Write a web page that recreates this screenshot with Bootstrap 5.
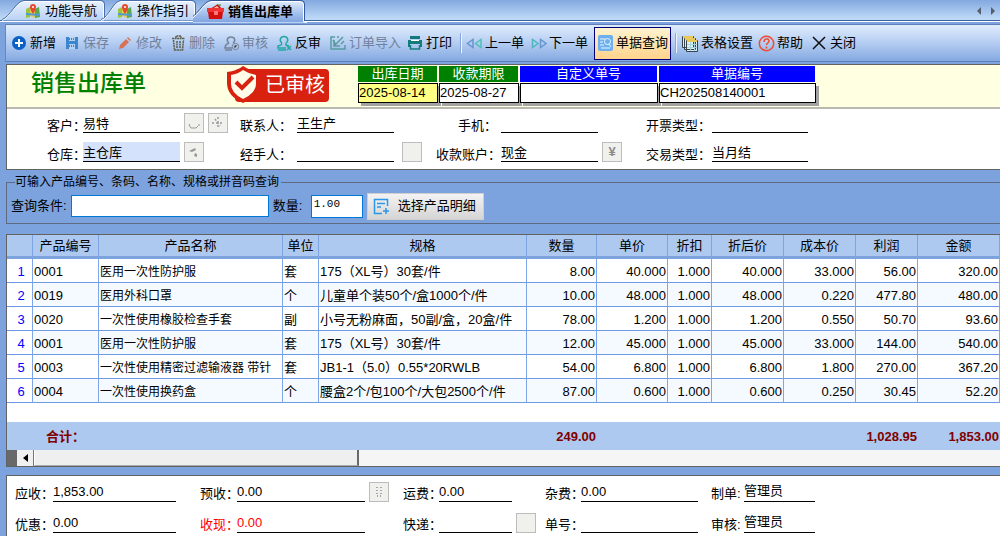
<!DOCTYPE html>
<html lang="zh-CN">
<head>
<meta charset="utf-8">
<meta name="viewport" content="width=device-width, initial-scale=1">
<title>销售出库单</title>
<link rel="stylesheet" href="https://cdn.jsdelivr.net/npm/bootstrap@5.3.0/dist/css/bootstrap.min.css">
<script src="https://cdn.jsdelivr.net/npm/bootstrap@5.3.0/dist/js/bootstrap.bundle.min.js"></script>
<style>
body{background:#7da3df;color:#000;font:13px/18px "Liberation Sans","Noto Sans CJK SC",sans-serif;overflow-x:hidden}
button,input{font:inherit;color:inherit;border-radius:0}
button{background:none;border:0;padding:0;white-space:nowrap}
svg{flex:none;display:block}
/* tabs */
.tabstrip{height:24px;padding-left:2px;background:linear-gradient(#83a8e0,#bfdaf7 19px,#bfdaf7 20px,#39609f 20px,#39609f 21px,#fff 21px,#fff 22px,#7da3df 22px)}
.doc-tab{height:21px;padding-left:23px}
.doc-tab span,.doc-tab .ico{position:relative}
.doc-tab .shape{position:absolute;left:0;top:0}
.t1{width:99px}.t2{width:92px;padding-left:16px}.t3{width:112px;height:23px;padding-left:14px;font-weight:700}
/* toolbar */
.tools{height:38px;margin-left:5px;padding-left:6px;border-top:1px solid #5f80ba;border-bottom:1px solid #5f80ba;border-left:1px solid #6686bf;background:linear-gradient(#dfecfd,#b9d0f3 45%,#84a9e1)}
.tools button{height:33px;gap:2px;flex:none;display:flex;align-items:center}
.w2{width:53px}.w3{width:64px}.w4{width:77px}
.tools .off{color:#71819c}
.tools .chosen{border:1px solid #00007c;background:linear-gradient(#fff2d0,#ffd38c);padding-left:3px;width:77px}
.sep{width:2px;height:20px;border-left:1px solid #88a8db;border-right:1px solid #eef5ff}
/* panels */
.panel{margin-left:6px;border:1px solid #626262;border-right:0;background:#fff}
.head{height:44px;background:#ffffe1;border-bottom:2px solid #b9b9b2;padding-left:24px}
.doc-title{font-size:23px;line-height:36px;font-weight:500;color:#008000;margin:0;width:196px}
.stamp{width:131px;height:38px}
.stamp b{position:absolute;left:38px;top:4px;font-size:20px;line-height:32px;font-weight:400;color:#fff}
.code{margin-right:1px}
.code label{display:block;height:16px;line-height:16px;color:#fff;text-align:center;margin:1px 1px 1px 0;background:#008000}
.code.blue label{background:#00f}
.code input{display:block;width:100%;height:20px;padding:0 0 2px;border:1px solid #000;background:#fff;box-shadow:3px 3px 0 #a3a3a3}
.c-date{width:80px}.c-no{width:138px}.c-id{width:157px}
.date-on input{background:#ffff84}
.fields{display:grid;align-items:end}
.fields label{white-space:nowrap}
.fields input,.fields output{display:block;width:100%;min-width:0;height:20px;padding:0;border:0;border-bottom:1px solid #000;background:transparent}
.main-fields{grid-template-columns:36px 40px 97px 60px 57px 97px 40px 67px 97px 48px 66px 96px 1fr;row-gap:7px;padding:4px 0 5px}
.main-fields input{margin-bottom:2px}
.mini{width:20px;height:20px;border:1px solid #bcbcbc!important;background:#f0f0ec!important;color:#8b8b8b;display:flex;align-items:center;justify-content:center}
.hot{background:#d5e2fc!important}
/* search */
.query{margin:5px 0 0 6px;border:1px solid #5f6b82;border-right:0;padding:0;height:49px}
.query legend{float:none;width:auto;margin:0 0 0 8px;padding:0 2px 0 0;font-size:12px;line-height:14px}
.query-row{gap:4px;padding:3px 0 0 4px;height:31px}
.query input{border:1px solid #0078d7;outline:0;background:#fff}
.q-text{width:198px;height:22px}
.q-lab{width:34px}
.q-num{width:52px;height:23px;padding:0 2px 4px;font:11px "Liberation Mono",monospace}
.pick{width:117px;height:27px;background:linear-gradient(#f3f3f3,#d5d5d5);border:1px solid #cfcfcf;padding-left:5px}
/* grid */
.goods-panel{margin-top:10px}
.goods{table-layout:fixed;width:100%;border-collapse:separate;border-spacing:0}
.goods th,.goods td{padding:0 1px;white-space:nowrap;overflow:hidden;line-height:18px}
.goods thead th{height:24px;background:#aec9ef;text-align:center;font-weight:400;border-right:1px solid #7da3e3;border-bottom:3px solid #7da3df}
.goods tbody td,.goods tbody th{height:24px;border-right:1px solid #7fa6e9;border-bottom:1px solid #6f9be5;padding-top:2px}
.goods tbody tr:nth-child(even) td{background:#f4faff}
.goods tbody th{font-weight:400;color:#00f;text-align:center;padding-left:4px}
.goods td:nth-child(3){font-size:12px}
.goods td:nth-child(n+6){text-align:right}
.goods .blank td{height:19px;border:0}
.goods .sum td{height:28px;border:0;background:#aec9ef;color:#800000;font-size:13px;font-weight:700;text-align:right;padding-top:2px}
.goods .sum td:first-child{text-align:left;padding-left:39px}
.hbar{height:16px;background:#f5f5f5}
.hbar i{width:10px;background:#696969}
.hbar button{width:17px;background:#f0f0f0;border-right:1px solid #777}
.hbar .thumb{width:325px;background:#efefef;border-left:1px solid #fff;border-right:2px solid #696969;border-bottom:1px solid #aaa}
.pay-panel{margin-top:8px}
.pay{grid-template-columns:8px 38px 123px 24px 37px 128px 38px 36px 73px 33px 36px 117px 13px 33px 71px 1fr;row-gap:11px;padding-top:6px;line-height:17px}
.red{color:#f00}
</style>
</head>
<body class="d-flex flex-column min-vh-100">
<svg width="0" height="0" class="position-absolute" aria-hidden="true">
  <defs>
    <linearGradient id="tabfill" x2="0" y2="1"><stop stop-color="#e6f0fd"/><stop offset="1" stop-color="#b9d2f5"/></linearGradient>
    <linearGradient id="tabon" x2="0" y2="1"><stop stop-color="#dfeafb"/><stop offset=".5" stop-color="#a9c4ee"/><stop offset="1" stop-color="#7da3df"/></linearGradient>
    <symbol id="map" viewBox="0 0 16 16"><path fill="#9cc63e" d="M1 6l4-2v10l-4 1z"/><path fill="#e3cf55" d="M5 4l5 2v9l-5-2z"/><path fill="#58a94b" d="M10 6l4-2 1 10-5 1z"/><path stroke="#4c9bd6" stroke-width="2" d="M1 11l14 1"/><path fill="#e5492e" d="M8 11C6 8 5 6 5 4a3 3 0 016 0c0 2-1 4-3 7z"/><circle cx="8" cy="4" r="1" fill="#fff"/></symbol>
  </defs>
</svg>

<nav class="tabstrip d-flex align-items-start">
  <button class="doc-tab t1 position-relative d-flex align-items-center gap-1">
    <svg class="shape" width="104" height="21"><path d="M0 20.500C8 18 14 2 22 1.500H98Q101.500 1.500 101.500 4V20.500" fill="url(#tabfill)" stroke="#fff"/><path d="M0 19.500C8 17 14 1 22 .5H99Q102.500 .5 102.500 4V20" fill="none" stroke="#4a70ab"/></svg>
    <svg class="ico" width="16" height="16"><use href="#map"/></svg><span>功能导航</span>
  </button>
  <button class="doc-tab t2 position-relative d-flex align-items-center gap-1">
    <svg class="shape" width="98" height="21"><path d="M0 20.500C8 18 12 2 20 1.500H90Q93.500 1.500 93.500 4V20.500" fill="url(#tabfill)" stroke="#fff"/><path d="M0 19.500C8 17 12 1 20 .5H91Q94.500 .5 94.500 4V20" fill="none" stroke="#4a70ab"/></svg>
    <svg class="ico" width="16" height="16"><use href="#map"/></svg><span>操作指引</span>
  </button>
  <button class="doc-tab t3 position-relative d-flex align-items-center gap-1">
    <svg class="shape" width="114" height="23"><path d="M-8 21.500C4 20 10 2 18 1.500H107Q110.500 1.500 110.500 4V21.500L114 23H-8Z" fill="url(#tabon)" stroke="#fff"/><path d="M-8 20.500C4 18 10 1 18 .5H108Q111.500 .5 111.500 4V20.500" fill="none" stroke="#33599a"/></svg>
    <svg class="ico" width="17" height="17" viewBox="0 0 17 17"><path fill="#c91515" d="M3 6l8-5 4 5z"/><path fill="#f3b6a7" d="M5 6l5-3 3 3z"/><path fill="#f03434" d="M0 5h17v4H0z"/><path fill="#d50e0e" d="M1 9h15l-1 7H2z"/><path fill="#f77" d="M7 8h4v4H7z"/><path fill="#47a044" d="M11 2l3-1-1 3z"/></svg><span>销售出库单</span>
  </button>
  <div class="ms-auto d-flex gap-2 pt-1 pe-1">
    <button aria-label="向左"><svg width="6" height="14" viewBox="0 0 6 14"><path fill="#555f6c" d="M5 3v8L1 7z"/></svg></button>
    <button aria-label="向右"><svg width="6" height="14" viewBox="0 0 6 14"><path fill="#555f6c" d="M1 3v8l4-4z"/></svg></button>
  </div>
</nav>

<div class="tools d-flex align-items-center" role="toolbar">
  <button class="w2"><svg width="16" height="16" viewBox="0 0 16 16"><circle cx="7" cy="8" r="7" fill="#0b62c4"/><path stroke="#fff" stroke-width="2" d="M7 4v8M3 8h8"/></svg>新增</button>
  <button class="w2 off"><svg width="16" height="16" viewBox="0 0 16 16"><path fill="#3b87cf" d="M1 2h12v12H1z"/><path fill="#b7d1f3" d="M4 2h6v4H4zM4 9h6v5H4z"/><path stroke="#3b87cf" stroke-width="2" stroke-dasharray="1 1" d="M4 11h6M4 4h6"/></svg>保存</button>
  <button class="w2 off"><svg width="16" height="16" viewBox="0 0 16 16"><path fill="#d97154" d="M1 14l1-4 6-6 3 3-6 6zM9 3l1-1 3 3-1 1z"/></svg>修改</button>
  <button class="w2 off"><svg width="16" height="16" viewBox="0 0 16 16"><path fill="none" stroke="#5e604f" stroke-width="1.500" stroke-dasharray="2 .5" d="M1 3.500h13M5 3V1h5v2M2.500 5l1 10h8l1-10M6 6v7M9 6v7"/></svg>删除</button>
  <button class="w2 off"><svg width="16" height="16" viewBox="0 0 16 16"><path fill="none" stroke="#768397" stroke-width="1.500" d="M5 8c-3-2-2-6 2-6s5 4 2 6M5 8c-3 1-4 2-4 5h7M1 15h7"/><circle cx="11.500" cy="11.500" r="3.200" fill="none" stroke="#768397"/><path stroke="#768397" d="M10 11l1 2 2-3"/></svg>审核</button>
  <button class="w2"><svg width="16" height="16" viewBox="0 0 16 16"><path fill="none" stroke="#25a7a2" stroke-width="1.500" d="M5 8c-3-2-2-6.500 2-6.500s5 4.500 2 6.500M5 8l-1 2-3 1v2h8M1 15h8M10 11l4 4M14 11l-4 4M9 8v2l3 1"/></svg>反审</button>
  <button class="w4 off"><svg width="17" height="16" viewBox="0 0 17 16"><path fill="none" stroke="#5a9a9f" stroke-width="1.500" d="M5 2H1v12h14v-4M7 2h2M4 5v6h6M5 10l8-8M3 5l3 5M11 9l3-3"/></svg>订单导入</button>
  <button class="w2"><svg width="17" height="16" viewBox="0 0 17 16"><path fill="#137b7b" d="M3 1h10v3H3zM1 5h14v7h-2V9H3v3H1z"/><path fill="none" stroke="#137b7b" stroke-width="1.500" d="M3.500 10v4h9v-4"/><path stroke="#fff" d="M4 5.500h8"/></svg>打印</button>
  <span class="sep me-1"></span>
  <button class="w3"><svg width="17" height="16" viewBox="0 0 17 16"><path fill="none" stroke="#6795cf" stroke-width="1.500" d="M7 4.500v8L1.500 8.500z"/><path fill="none" stroke="#4fc1b8" stroke-width="1.500" d="M15 4.500v8L9.500 8.500z"/></svg>上一单</button>
  <button class="w3"><svg width="17" height="16" viewBox="0 0 17 16"><path fill="none" stroke="#4fb6bf" stroke-width="1.500" d="M2.500 4.500v8L8 8.500z"/><path fill="none" stroke="#6795cf" stroke-width="1.500" d="M10.500 4.500v8L16 8.500z"/></svg>下一单</button>
  <button class="chosen"><svg width="16" height="16" viewBox="0 0 16 16"><rect width="15" height="16" rx="2" fill="#6eb0ee"/><path fill="none" stroke="#e9f6ff" d="M2 4h5M2 7h3M2 10h4M3 13h9M11 9l2 3"/><circle cx="9.500" cy="6.500" r="3" fill="none" stroke="#e9f6ff"/></svg>单据查询</button>
  <span class="sep mx-1"></span>
  <button class="w4"><svg width="18" height="17" viewBox="0 0 18 17"><path fill="#ddf1f5" stroke="#37444c" d="M1.500 1.500h11v11h-11zM3.500 3.500h11v11h-11zM5.500 5.500h11v11h-11z"/><path fill="#e8c75b" d="M2 1h10v2H2zM4 3h10v2H4zM6 5h10v2H6z"/><path stroke="#a9d3da" d="M6 9.500h10M6 12.500h10M9.500 7v9M13.500 7v9"/></svg>表格设置</button>
  <button class="w2"><svg width="17" height="17" viewBox="0 0 17 17"><circle cx="8.500" cy="8.500" r="7.200" fill="none" stroke="#f04a30" stroke-width="1.500"/><path fill="none" stroke="#f04a30" stroke-width="1.500" d="M6 7c0-4 5-4 5-1 0 2-2.500 2-2.500 4M8.500 11.500v2"/></svg>帮助</button>
  <button class="w2"><svg width="17" height="16" viewBox="0 0 17 16"><path stroke="#111" stroke-width="1.500" d="M2 2l12 12M14 2L2 14"/></svg>关闭</button>
</div>

<section class="panel mt-0 order-panel" style="margin-top:2px!important">
  <header class="head d-flex">
    <h1 class="doc-title">销售出库单</h1>
    <div class="stamp position-relative">
      <svg width="104" height="38" viewBox="0 0 104 38"><rect x="8" y="4" width="94" height="33" rx="4" fill="#d92110"/><path fill="#d92110" d="M0 7Q10 6 16 1q7 5 17 6v11q0 12-17 20Q0 31 0 18z"/><path fill="#fffbe8" d="M4 10q7-1 12-5 6 4 13 5v9q0 9-13 15Q4 28 4 19z"/><path fill="none" stroke="#d92110" stroke-width="4" d="M9 17l6 6 11-11"/></svg>
      <b>已审核</b>
    </div>
    <div class="code c-date date-on"><label for="d1">出库日期</label><input id="d1" value="2025-08-14"></div>
    <div class="code c-date"><label for="d2">收款期限</label><input id="d2" value="2025-08-27"></div>
    <div class="code c-no blue"><label for="d3">自定义单号</label><input id="d3"></div>
    <div class="code c-id blue"><label for="d4">单据编号</label><input id="d4" value="CH202508140001"></div>
  </header>
  <div class="fields main-fields">
    <span></span><span class="ps-1"><label for="f1">客户：</label></span><input id="f1" value="易特">
    <span class="d-flex gap-1 ps-1 align-self-start"><button class="mini" aria-label="选择客户"><svg width="14" height="14" viewBox="0 0 14 14"><path fill="none" stroke="#999" d="M2 9l2 3h5l2-2M3 9l-1-1M11 9h2"/></svg></button><button class="mini" aria-label="新建客户"><svg width="14" height="14" viewBox="0 0 14 14"><path fill="none" stroke="#999" stroke-width="1.500" stroke-dasharray="2 2" d="M1 7h12M7 1v12M4 3l5 7"/></svg></button></span>
    <label for="f2">联系人：</label><input id="f2" value="王生产"><span></span>
    <label for="f3" class="text-end pe-1">手机：</label><input id="f3"><span></span>
    <label for="f4">开票类型：</label><input id="f4"><span></span>

    <span></span><span class="ps-1"><label for="g1">仓库：</label></span><input id="g1" class="hot" value="主仓库">
    <span class="ps-1 align-self-start"><button class="mini" aria-label="选择仓库"><svg width="14" height="14" viewBox="0 0 14 14"><path fill="#999" d="M2 6l6-3 1 2-4 2zM8 8l2 1v3l-3-1z"/></svg></button></span>
    <label for="g2">经手人：</label><input id="g2"><span class="ps-2 align-self-start"><button class="mini" aria-label="选择经手人"></button></span>
    <label for="g3" class="text-end">收款账户：</label><input id="g3" value="现金"><span class="ps-1 align-self-start"><button class="mini fw-bold" aria-label="选择账户">¥</button></span>
    <label for="g4">交易类型：</label><input id="g4" value="当月结"><span></span>
  </div>
</section>

<fieldset class="query">
  <legend>可输入产品编号、条码、名称、规格或拼音码查询</legend>
  <div class="query-row d-flex align-items-center">
    <label for="q1" class="text-nowrap">查询条件:</label><input id="q1" class="q-text">
    <label for="q2" class="q-lab text-nowrap">数量:</label><input id="q2" class="q-num" value="1.00">
    <button class="pick d-flex align-items-center gap-2"><svg width="17" height="17" viewBox="0 0 17 17"><path fill="none" stroke="#2b97ea" stroke-width="1.500" d="M9 15.500H1.500v-14h13V8M4 5.500h8M4 9h4M13 10v6M10 13h6"/></svg>选择产品明细</button>
  </div>
</fieldset>

<section class="panel goods-panel">
  <table class="goods">
    <colgroup><col style="width:26px"><col style="width:66px"><col style="width:184px"><col style="width:36px"><col><col style="width:70px"><col style="width:71px"><col style="width:44px"><col style="width:72px"><col style="width:72px"><col style="width:62px"><col style="width:82px"></colgroup>
    <thead><tr><th></th><th>产品编号</th><th>产品名称</th><th>单位</th><th>规格</th><th>数量</th><th>单价</th><th>折扣</th><th>折后价</th><th>成本价</th><th>利润</th><th>金额</th></tr></thead>
    <tbody>
      <tr><th>1</th><td>0001</td><td>医用一次性防护服</td><td>套</td><td>175（XL号）30套/件</td><td>8.00</td><td>40.000</td><td>1.000</td><td>40.000</td><td>33.000</td><td>56.00</td><td>320.00</td></tr>
      <tr><th>2</th><td>0019</td><td>医用外科口罩</td><td>个</td><td>儿童单个装50个/盒1000个/件</td><td>10.00</td><td>48.000</td><td>1.000</td><td>48.000</td><td>0.220</td><td>477.80</td><td>480.00</td></tr>
      <tr><th>3</th><td>0020</td><td>一次性使用橡胶检查手套</td><td>副</td><td>小号无粉麻面，50副/盒，20盒/件</td><td>78.00</td><td>1.200</td><td>1.000</td><td>1.200</td><td>0.550</td><td>50.70</td><td>93.60</td></tr>
      <tr><th>4</th><td>0001</td><td>医用一次性防护服</td><td>套</td><td>175（XL号）30套/件</td><td>12.00</td><td>45.000</td><td>1.000</td><td>45.000</td><td>33.000</td><td>144.00</td><td>540.00</td></tr>
      <tr><th>5</th><td>0003</td><td>一次性使用精密过滤输液器 带针</td><td>套</td><td>JB1-1（5.0）0.55*20RWLB</td><td>54.00</td><td>6.800</td><td>1.000</td><td>6.800</td><td>1.800</td><td>270.00</td><td>367.20</td></tr>
      <tr><th>6</th><td>0004</td><td>一次性使用换药盒</td><td>个</td><td>腰盒2个/包100个/大包2500个/件</td><td>87.00</td><td>0.600</td><td>1.000</td><td>0.600</td><td>0.250</td><td>30.45</td><td>52.20</td></tr>
    </tbody>
    <tfoot>
      <tr class="blank"><td colspan="12"></td></tr>
      <tr class="sum"><td colspan="5">合计：</td><td>249.00</td><td colspan="4"></td><td>1,028.95</td><td>1,853.00</td></tr>
    </tfoot>
  </table>
  <div class="hbar d-flex"><i></i><button class="d-flex align-items-center justify-content-center" aria-label="向左滚动"><svg width="5" height="8"><path d="M5 0v8L0 4z"/></svg></button><div class="thumb"></div></div>
</section>

<section class="panel pay-panel border-bottom-0 flex-grow-1">
  <div class="fields pay">
    <span></span><label for="p1">应收：</label><input id="p1" value="1,853.00"><span></span>
    <label for="p2">预收：</label><input id="p2" value="0.00"><span class="ps-1"><button class="mini" aria-label="预收明细"><svg width="12" height="12" viewBox="0 0 12 12"><path stroke="#a5a5a5" stroke-width="2" stroke-dasharray="1 2" d="M4 1v8M8 1v8M4 10h5"/></svg></button></span>
    <label for="p3">运费：</label><input id="p3" value="0.00"><span></span>
    <label for="p4">杂费：</label><input id="p4" value="0.00"><span></span>
    <label for="p5">制单:</label><output id="p5">管理员</output><span></span>

    <span></span><label for="r1">优惠：</label><input id="r1" value="0.00"><span></span>
    <label for="r2" class="red">收现：</label><input id="r2" class="red" value="0.00"><span></span>
    <label for="r3">快递：</label><input id="r3"><span class="ps-1"><button class="mini" aria-label="选择快递"></button></span>
    <label for="r4">单号：</label><input id="r4"><span></span>
    <label for="r5">审核:</label><output id="r5">管理员</output><span></span>
  </div>
</section>
</body>
</html>
